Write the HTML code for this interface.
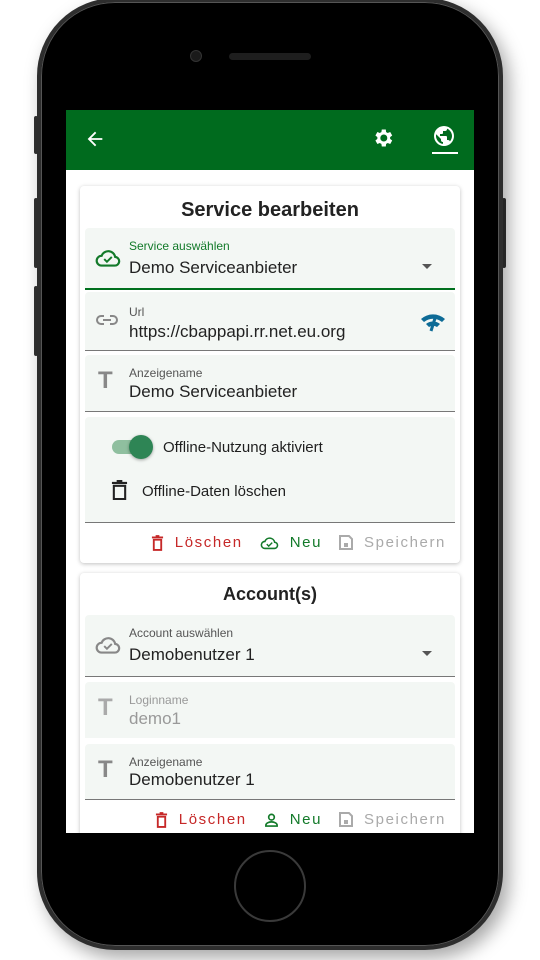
<!DOCTYPE html>
<html><head><meta charset="utf-8"><style>
*{box-sizing:border-box;margin:0;padding:0}
body{width:540px;height:960px;background:#fff;position:relative;overflow:hidden;font-family:"Liberation Sans",sans-serif;color:#1f1f1f}
.phone{position:absolute;left:37px;top:-2px;width:466px;height:952px;border-radius:78px;background:#000;border:4px solid #2e2e2e;box-shadow:0 0 0 1px #555 inset,6px 8px 18px rgba(0,0,0,.35)}
.btn{position:absolute;background:#333;border-radius:2px;width:4px}
.screen{position:absolute;left:66px;top:110px;width:408px;height:723px;background:#fff;overflow:hidden}
.hdr{height:60px;background:#006b1e;position:relative}
.card{position:absolute;left:14px;width:380px;background:#fff;border-radius:4px;box-shadow:0 1px 4px rgba(0,0,0,.25)}
.title{text-align:center;font-size:20px;font-weight:bold;color:#222}
.f{position:absolute;left:5px;width:370px;background:#f3f7f4;border-radius:4px 4px 0 0;border-bottom:1px solid #777}
.lbl{position:absolute;left:44px;font-size:12px;color:#555}
.val{position:absolute;left:44px;font-size:17px;color:#222}
.ic{position:absolute;left:10px}
.acts{position:absolute;right:14px;font-size:15px;letter-spacing:1.6px;display:flex;gap:17px}
.acts span{display:flex;align-items:center;gap:11px}
</style></head><body>
<div class="btn" style="left:34px;top:116px;height:38px"></div>
<div class="btn" style="left:34px;top:198px;height:70px"></div>
<div class="btn" style="left:34px;top:286px;height:70px"></div>
<div class="btn" style="left:502px;top:198px;height:70px"></div>
<div class="phone"></div>
<div style="position:absolute;left:190px;top:50px;width:12px;height:12px;border-radius:50%;background:#1a1a1a;border:1px solid #333"></div>
<div style="position:absolute;left:229px;top:53px;width:82px;height:7px;border-radius:4px;background:#1e1e1e"></div>
<div style="position:absolute;left:234px;top:850px;width:72px;height:72px;border-radius:50%;border:2px solid #3a3a3a"></div>
<div class="screen">
 <div class="hdr">
  <svg style="position:absolute;left:18px;top:18px" width="22" height="22" viewBox="0 0 24 24"><path d="M20 11H7.8l5.6-5.6L12 4l-8 8 8 8 1.4-1.4L7.8 13H20z" fill="#fff"/></svg>
  <svg style="position:absolute;left:305px;top:16px" width="24" height="24" viewBox="0 0 24 24"><path fill="#fff" d="M19.1 12.9a7 7 0 000-1.8l2.1-1.6-2-3.5-2.5 1a7 7 0 00-1.6-.9L14.8 3.5h-4l-.4 2.6a7 7 0 00-1.6.9l-2.4-1-2 3.5 2 1.6a7 7 0 000 1.8l-2 1.6 2 3.5 2.4-1a7 7 0 001.6.9l.4 2.6h4l.3-2.6a7 7 0 001.6-.9l2.5 1 2-3.5zM12.8 15.5a3.5 3.5 0 110-7 3.5 3.5 0 010 7z"/></svg>
  <svg style="position:absolute;left:366px;top:14px" width="24" height="24" viewBox="0 0 24 24"><path fill="#fff" d="M12 2a10 10 0 100 20 10 10 0 000-20zm-1 17.9A8 8 0 014.2 10.2L9 15v1a2 2 0 002 2zm6.9-2.5A2 2 0 0016 16h-1v-3a1 1 0 00-1-1H8v-2h2a1 1 0 001-1V7h2a2 2 0 002-2v-.4a8 8 0 012.9 12.8z"/></svg>
  <div style="position:absolute;left:366px;top:42px;width:26px;height:2px;background:#fff"></div>
 </div>
 <div class="card" style="top:76px;height:377px">
  <div class="title" style="margin-top:13px">Service bearbeiten</div>
  <div class="f" style="top:42px;height:62px;border-bottom:2px solid #00701e">
   <svg class="ic" style="top:19px" width="26" height="22" viewBox="0 0 24 20"><path d="M6 17h12a4 4 0 00.6-8 6.5 6.5 0 00-12.5-1A4.5 4.5 0 006 17z" fill="none" stroke="#137a2a" stroke-width="2"/><path d="M8.5 11l2.5 2.5 4.5-4.5" fill="none" stroke="#137a2a" stroke-width="1.8"/></svg>
   <div class="lbl" style="top:11px;color:#137a2a">Service auswählen</div>
   <div class="val" style="top:30px">Demo Serviceanbieter</div>
   <div style="position:absolute;left:337px;top:36px;border:5px solid transparent;border-top:5px solid #555"></div>
  </div>
  <div class="f" style="top:106px;height:59px">
   <svg class="ic" style="top:20px" width="24" height="16" viewBox="0 0 24 16"><path d="M9 12H6a4 4 0 010-8h3M15 4h3a4 4 0 010 8h-3M8 8h8" fill="none" stroke="#888" stroke-width="2"/></svg>
   <div class="lbl" style="top:13px">Url</div>
   <div class="val" style="top:30px">https://cbappapi.rr.net.eu.org</div>
   <svg style="position:absolute;left:335px;top:20px" width="26" height="20" viewBox="0 0 26 20"><path d="M1 7a18 18 0 0124 0l-3 3a14 14 0 00-18 0zM6 12a11 11 0 0114 0l-3 3a7 7 0 00-8 0z" fill="#0d6b96"/><path d="M16 3l-5 16" stroke="#0d6b96" stroke-width="3"/></svg>
  </div>
  <div class="f" style="top:169px;height:57px">
   <div class="ic" style="top:12px;left:13px;font-size:24px;font-weight:bold;color:#888">T</div>
   <div class="lbl" style="top:11px">Anzeigename</div>
   <div class="val" style="top:27px">Demo Serviceanbieter</div>
  </div>
  <div class="f" style="top:231px;height:106px">
   <div style="position:absolute;left:27px;top:23px;width:36px;height:14px;border-radius:7px;background:#8fbf9f"></div>
   <div style="position:absolute;left:44px;top:18px;width:24px;height:24px;border-radius:50%;background:#2e8555;box-shadow:0 1px 3px rgba(0,0,0,.35)"></div>
   <div style="position:absolute;left:78px;top:22px;font-size:15px">Offline-Nutzung aktiviert</div>
   <svg style="position:absolute;left:26px;top:63px" width="17" height="21" viewBox="0 0 18 22"><path d="M3 6h12v14H3zM1 3h16M6 1h6" fill="none" stroke="#222" stroke-width="2.2"/></svg>
   <div style="position:absolute;left:57px;top:66px;font-size:15px">Offline-Daten löschen</div>
  </div>
  <div class="acts" style="top:348px">
   <span style="color:#c62828"><svg width="13" height="16" viewBox="0 0 14 17"><path d="M3 5h8v11H3zM1 2.5h12M5 1h4" fill="none" stroke="#c62828" stroke-width="2"/></svg>Löschen</span>
   <span style="color:#137a2a"><svg width="19" height="14" viewBox="0 0 24 18"><path d="M6 16h12a4 4 0 00.6-8 6.5 6.5 0 00-12.5-1A4.5 4.5 0 006 16z" fill="none" stroke="#137a2a" stroke-width="2"/><path d="M8.5 10.5l2.5 2.5 4.5-4.5" fill="none" stroke="#137a2a" stroke-width="1.8"/></svg>Neu</span>
   <span style="color:#aaa"><svg width="14" height="15" viewBox="0 0 14 15"><path d="M1 1h9l3 3v10H1z" fill="none" stroke="#aaa" stroke-width="2"/><rect x="5" y="8" width="4" height="4" fill="#aaa"/></svg>Speichern</span>
  </div>
 </div>
 <div class="card" style="top:463px;height:290px">
  <div class="title" style="margin-top:11px;font-size:18px">Account(s)</div>
  <div class="f" style="top:42px;height:62px">
   <svg class="ic" style="top:19px" width="26" height="22" viewBox="0 0 24 20"><path d="M6 17h12a4 4 0 00.6-8 6.5 6.5 0 00-12.5-1A4.5 4.5 0 006 17z" fill="none" stroke="#888" stroke-width="2"/><path d="M8.5 11l2.5 2.5 4.5-4.5" fill="none" stroke="#888" stroke-width="1.8"/></svg>
   <div class="lbl" style="top:11px">Account auswählen</div>
   <div class="val" style="top:30px">Demobenutzer 1</div>
   <div style="position:absolute;left:337px;top:36px;border:5px solid transparent;border-top:5px solid #555"></div>
  </div>
  <div class="f" style="top:109px;height:56px;border-bottom:none">
   <div class="ic" style="top:12px;left:13px;font-size:24px;font-weight:bold;color:#aaa">T</div>
   <div class="lbl" style="top:11px;color:#999">Loginname</div>
   <div class="val" style="top:27px;color:#999">demo1</div>
  </div>
  <div class="f" style="top:171px;height:56px">
   <div class="ic" style="top:12px;left:13px;font-size:24px;font-weight:bold;color:#888">T</div>
   <div class="lbl" style="top:11px">Anzeigename</div>
   <div class="val" style="top:26px">Demobenutzer 1</div>
  </div>
  <div class="acts" style="top:238px">
   <span style="color:#c62828"><svg width="13" height="16" viewBox="0 0 14 17"><path d="M3 5h8v11H3zM1 2.5h12M5 1h4" fill="none" stroke="#c62828" stroke-width="2"/></svg>Löschen</span>
   <span style="color:#137a2a"><svg width="15" height="14" viewBox="0 0 16 15"><circle cx="8" cy="4.5" r="3" fill="none" stroke="#137a2a" stroke-width="1.8"/><path d="M2 14v-1c0-2 3-3.5 6-3.5s6 1.5 6 3.5v1z" fill="none" stroke="#137a2a" stroke-width="1.8"/></svg>Neu</span>
   <span style="color:#aaa"><svg width="14" height="15" viewBox="0 0 14 15"><path d="M1 1h9l3 3v10H1z" fill="none" stroke="#aaa" stroke-width="2"/><rect x="5" y="8" width="4" height="4" fill="#aaa"/></svg>Speichern</span>
  </div>
 </div>
</div>
</body></html>
